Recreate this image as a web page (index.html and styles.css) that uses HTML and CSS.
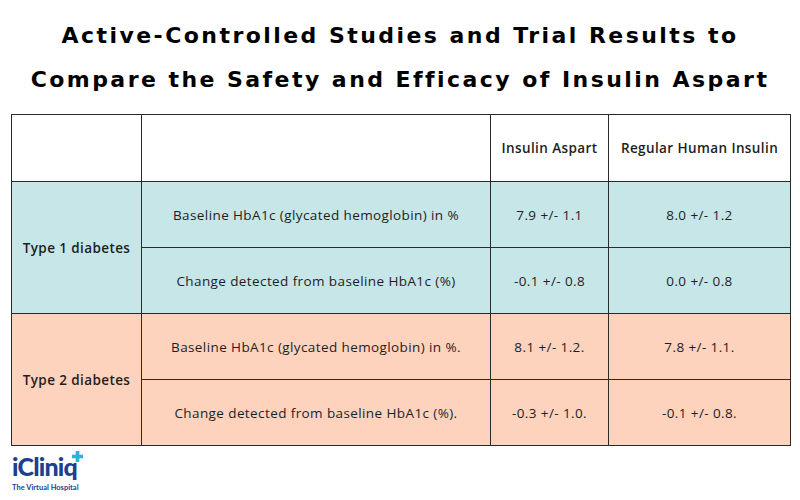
FILE: index.html
```html
<!DOCTYPE html>
<html>
<head>
<meta charset="utf-8">
<link rel="stylesheet" href="styles.css">
</head>
<body>
<div class="page">
  <h1 class="title">Active-Controlled Studies and Trial Results to<br>Compare the Safety and Efficacy of Insulin Aspart</h1>
  <table class="grid">
    <colgroup>
      <col class="c1"><col class="c2"><col class="c3"><col class="c4">
    </colgroup>
    <tr class="head">
      <td></td><td></td><th>Insulin Aspart</th><th>Regular Human Insulin</th>
    </tr>
    <tr class="t1">
      <th rowspan="2">Type 1 diabetes</th>
      <td>Baseline HbA1c (glycated hemoglobin) in %</td><td>7.9 +/- 1.1</td><td>8.0 +/- 1.2</td>
    </tr>
    <tr class="t1">
      <td>Change detected from baseline HbA1c (%)</td><td>-0.1 +/- 0.8</td><td>0.0 +/- 0.8</td>
    </tr>
    <tr class="t2">
      <th rowspan="2">Type 2 diabetes</th>
      <td>Baseline HbA1c (glycated hemoglobin) in %.</td><td>8.1 +/- 1.2.</td><td>7.8 +/- 1.1.</td>
    </tr>
    <tr class="t2">
      <td>Change detected from baseline HbA1c (%).</td><td>-0.3 +/- 1.0.</td><td>-0.1 +/- 0.8.</td>
    </tr>
  </table>
  <div class="logo">
    <div class="brand">iCliniq<svg class="plus" viewBox="0 0 10 10" width="11" height="11"><path d="M3.3 0h3.4v3.3h3.3v3.4h-3.3v3.3h-3.4v-3.3h-3.3v-3.4h3.3z" fill="#2bb3e0"/></svg></div>
    <div class="tag">The Virtual Hospital</div>
  </div>
</div>
</body>
</html>
```
FILE: styles.css
```css
html, body {
  margin: 0;
  padding: 0;
  background: #ffffff;
}
.page {
  width: 800px;
  height: 500px;
  position: relative;
  font-family: "Open Sans", "DejaVu Sans", sans-serif;
  color: #1e1e1e;
}
.title {
  margin: 0;
  padding-top: 14px;
  font-family: "DejaVu Sans", sans-serif;
  font-weight: bold;
  font-size: 22px;
  line-height: 44px;
  letter-spacing: 2.45px;
  text-align: center;
  color: #000;
}
.grid {
  margin: 12px 0 0 11px;
  width: 779px;
  border-collapse: collapse;
  table-layout: fixed;
  font-size: 13.5px;
  letter-spacing: 0.4px;
}
.c1 { width: 130px; }
.c2 { width: 349px; }
.c3 { width: 118px; }
.c4 { width: 182px; }
.grid td, .grid th {
  border: 1px solid #2a2a2a;
  text-align: center;
  vertical-align: middle;
  padding: 0;
  height: 65px;
  font-weight: normal;
}
.grid th { font-weight: 600; }
.head td, .head th { background: #ffffff; height: 66px; }
.t1 td, .t1 th { background: #c6e6e8; }
.t2 td, .t2 th { background: #fdd3be; }
.logo {
  margin: 9px 0 0 12px;
  width: 90px;
}
.brand {
  font-family: "Lato", sans-serif;
  font-weight: 900;
  font-size: 25px;
  line-height: 22px;
  color: #1c3f8f;
  letter-spacing: -0.8px;
  position: relative;
  display: inline-block;
}
.plus {
  position: absolute;
  right: -6px;
  top: -4px;
}
.tag {
  margin-top: 2px;
  font-family: "Lato", sans-serif;
  font-size: 7.5px;
  color: #1c3f8f;
  line-height: 9px;
  font-weight: 700;
}
```
